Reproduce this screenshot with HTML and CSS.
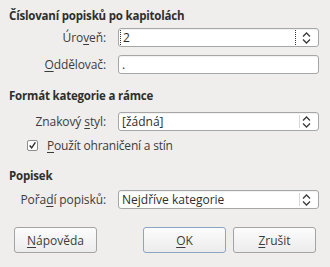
FILE: index.html
```html
<!DOCTYPE html>
<html lang="cs">
<head>
<meta charset="utf-8">
<link rel="stylesheet" href="styles.css">
</head>
<body>
<div class="dlg">
  <h2 class="hd hd-1">Číslovaní popisků po kapitolách</h2>
  <div class="row row-a">
    <label class="lbl">Úro<u>v</u>eň:</label>
    <div class="field">
      <span class="val focus">2</span>
      <svg class="arr" width="9" height="12" viewBox="0 0 9 12"><path d="M1 4.5 L4.5 1 L8 4.5 M1 7.5 L4.5 11 L8 7.5" fill="none" stroke="#3a3a3a" stroke-width="1.3"/></svg>
    </div>
  </div>
  <div class="row row-b">
    <label class="lbl"><u>O</u>ddělovač:</label>
    <div class="field"><span class="val">.</span></div>
  </div>

  <h2 class="hd hd-2">Formát kategorie a rámce</h2>
  <div class="row row-b">
    <label class="lbl">Znakový <u>s</u>tyl:</label>
    <div class="field">
      <span class="val">[žádná]</span>
      <span class="sep"></span>
      <svg class="arr" width="9" height="12" viewBox="0 0 9 12"><path d="M1 4.5 L4.5 1 L8 4.5 M1 7.5 L4.5 11 L8 7.5" fill="none" stroke="#3a3a3a" stroke-width="1.3"/></svg>
    </div>
  </div>
  <div class="check">
    <span class="box"><svg width="11" height="11" viewBox="0 0 11 11"><path d="M2 5.5 L4.5 8.3 L9 1.8" fill="none" stroke="#2e2e2e" stroke-width="1.7"/></svg></span>
    <span class="ctext"><u>P</u>oužít ohraničení a stín</span>
  </div>

  <h2 class="hd hd-3">Popisek</h2>
  <div class="row row-c">
    <label class="lbl">Pořa<u>d</u>í popisků:</label>
    <div class="field">
      <span class="val">Nejdříve kategorie</span>
      <span class="sep"></span>
      <svg class="arr" width="9" height="12" viewBox="0 0 9 12"><path d="M1 4.5 L4.5 1 L8 4.5 M1 7.5 L4.5 11 L8 7.5" fill="none" stroke="#3a3a3a" stroke-width="1.3"/></svg>
    </div>
  </div>

  <div class="btns">
    <button class="btn"><u>N</u>ápověda</button>
    <span class="spacer"></span>
    <button class="btn btn-def"><u>O</u>K</button>
    <button class="btn"><u>Z</u>rušit</button>
  </div>
</div>
</body>
</html>
```

FILE: styles.css
```css
* { box-sizing: border-box; }
html, body {
  margin: 0;
  padding: 0;
  background: #efeeed;
  width: 330px;
  height: 267px;
  overflow: hidden;
}
body {
  font-family: "Open Sans", "DejaVu Sans", sans-serif;
  font-size: 12px;
  color: #3c3c3c;
}
.dlg {
  padding: 8px 11px 0 9px;
  display: flex;
  flex-direction: column;
}
.hd {
  margin: 0;
  font-size: 11.5px;
  font-weight: 700;
  letter-spacing: -0.2px;
  line-height: 16px;
  color: #2e2e2e;
}
.hd-2 { margin-top: 14px; }
.hd-3 { margin-top: 17px; }
u { text-decoration-thickness: 1px; text-underline-offset: 2px; }
.row {
  display: flex;
  align-items: center;
  height: 19px;
}
.row-a { margin-top: 4px; }
.row-b { margin-top: 8px; }
.row-c { margin-top: 6px; }
.lbl {
  width: 97px;
  text-align: right;
  margin-right: 12px;
  line-height: 16px;
  letter-spacing: -0.1px;
}
.field {
  width: 201px;
  height: 19px;
  background: #fff;
  border: 1px solid #a6a6a6;
  border-radius: 3px;
  display: flex;
  align-items: center;
  box-shadow: inset 0 1px 1px rgba(0,0,0,0.06);
  position: relative;
}
.val {
  flex: 1;
  padding-left: 3px;
  line-height: 15px;
  color: #2e2e2e;
  white-space: nowrap;
}
.val.focus {
  margin-left: 1px;
  padding-left: 2px;
  border-left: 1px dotted #333;
  border-right: 1px dotted #333;
  margin-right: 5px;
}
.sep {
  width: 1px;
  height: 13px;
  background: #d8d8d8;
  margin-right: 1px;
}
.arr {
  margin-right: 7px;
  margin-left: 1px;
  flex: none;
}
.check {
  display: flex;
  align-items: center;
  height: 11px;
  margin-top: 9px;
  padding-left: 18px;
}
.box {
  width: 11px;
  height: 11px;
  border: 1px solid #8c8c8c;
  border-radius: 2px;
  background: #fff;
  display: flex;
  align-items: center;
  justify-content: center;
  flex: none;
}
.box svg { display: block; }
.ctext {
  margin-left: 9px;
  line-height: 16px;
  white-space: nowrap;
  letter-spacing: -0.2px;
}
.btns {
  display: flex;
  margin: 18px 3px 0 5px;
  gap: 7px;
}
.spacer { flex: 1; }
.btn {
  width: 83px;
  height: 26px;
  font: inherit;
  color: #3c3c3c;
  border: 1px solid #a3a3a3;
  border-radius: 3px;
  background: linear-gradient(#fcfcfc, #ececec);
  padding: 0;
}
.btn-def { border-color: #8ea4c2; }
```
